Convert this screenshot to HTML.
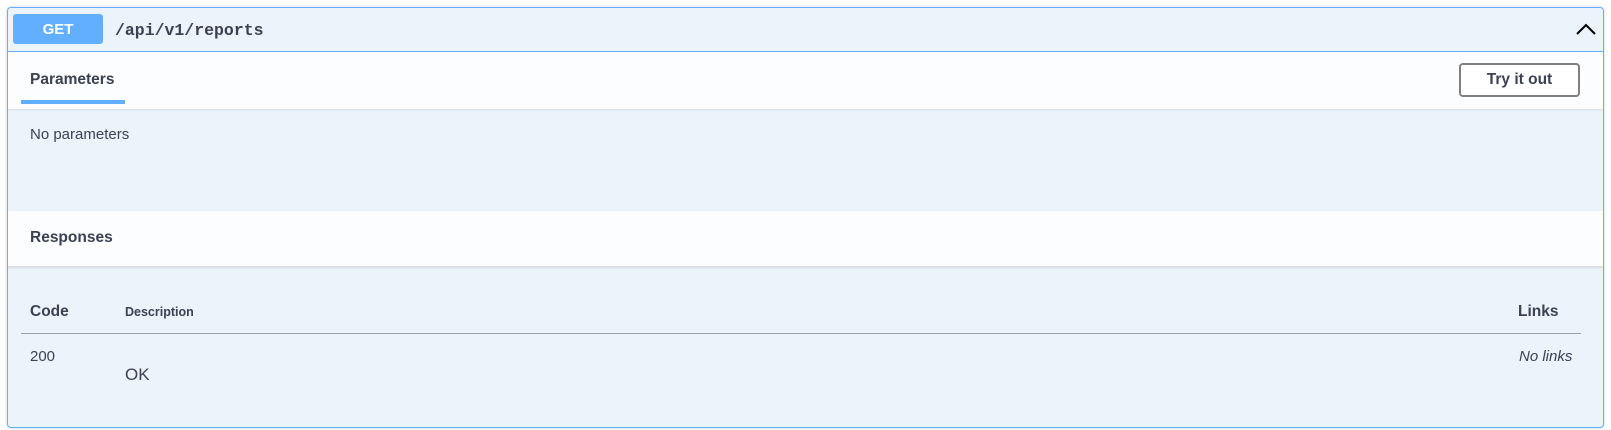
<!DOCTYPE html>
<html><head><style>
*{box-sizing:border-box;margin:0;padding:0}
body{width:1611px;height:430px;background:#fff;font-family:"Liberation Sans",sans-serif;color:#3b4151;position:relative;overflow:hidden}
.box{position:absolute;left:7px;top:7px;width:1597px;height:421px;border:1px solid #61affe;border-radius:4px;background:#ebf3fb;box-shadow:0 0 3px rgba(0,0,0,.19);overflow:hidden}
.sum{position:absolute;left:0;top:0;width:100%;height:44px;border-bottom:1px solid #61affe;background:#ebf3fb}
.get{position:absolute;left:5px;top:6px;width:90px;height:30px;background:#61affe;border-radius:3px;color:#fff;font-weight:bold;font-size:15px;text-align:center;line-height:32px}
.path{position:absolute;left:107px;top:13px;font-family:"Liberation Mono",monospace;font-weight:bold;font-size:16.5px;color:#3b4151}
.hdr{position:absolute;left:0;width:100%;background:rgba(255,255,255,.8);box-shadow:0 1px 2px rgba(0,0,0,.1)}
.t{position:absolute;font-size:15.5px;font-weight:bold}
.tab{position:absolute;left:13px;top:48px;width:104px;height:4px;background:#61affe}
.btn{position:absolute;left:1451px;top:11px;width:121px;height:34px;border:2px solid #808080;border-radius:4px;font-weight:bold;font-size:15.5px;text-align:center;line-height:30px;background:#fff}
.s{position:absolute;font-size:15px}
</style></head><body>
<div class="box">
 <div class="sum">
  <div class="get">GET</div>
  <div class="path">/api/v1/reports</div>
  <svg style="position:absolute;left:1567px;top:14px" width="22" height="14" viewBox="0 0 22 14"><path d="M2 12 L11 3 L20 12" fill="none" stroke="#000" stroke-width="2"/></svg>
 </div>
 <div class="hdr" style="top:44px;height:57px">
  <div class="t" style="left:22px;top:19px">Parameters</div>
  <div class="tab"></div>
  <div class="btn">Try it out</div>
 </div>
 <div class="s" style="left:22px;top:118px">No parameters</div>
 <div class="hdr" style="top:203px;height:56px;border-bottom:1px solid #d9dde3">
  <div class="t" style="left:22px;top:18px">Responses</div>
 </div>
 <div class="t" style="left:22px;top:295px">Code</div>
 <div class="t" style="left:117px;top:297px;font-size:12.5px">Description</div>
 <div class="t" style="left:1510px;top:295px">Links</div>
 <div style="position:absolute;left:13px;top:325px;width:1560px;height:1px;background:#9aa0aa"></div>
 <div class="s" style="left:22px;top:340px">200</div>
 <div class="s" style="left:117px;top:357px;font-size:17px">OK</div>
 <div class="s" style="left:1511px;top:340px;font-style:italic">No links</div>
</div>
</body></html>
